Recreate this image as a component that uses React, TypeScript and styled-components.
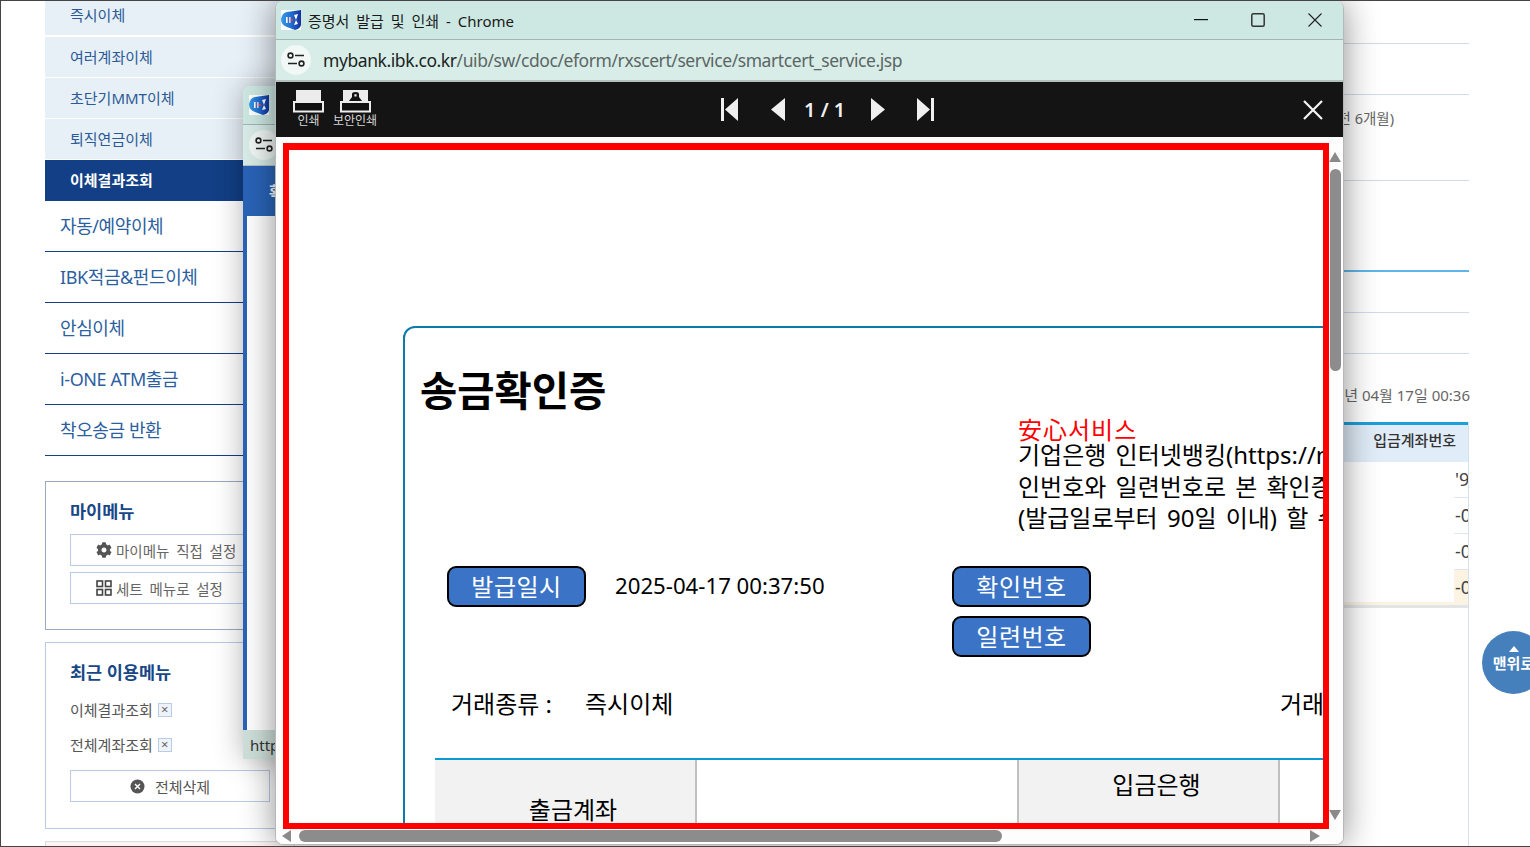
import React from 'react';
import styled, { createGlobalStyle } from 'styled-components';
import { FaCog } from 'react-icons/fa';

const GlobalStyle = createGlobalStyle`
    html, body {
        margin: 0;
        padding: 0;
        background: #fff;
    }
    * {
        box-sizing: border-box;
    }
`;

const FONT = `"Noto Sans", "Noto Sans CJK KR", sans-serif`;

const subMenus = ['즉시이체', '여러계좌이체', '초단기MMT이체', '퇴직연금이체', '이체결과조회'];
const mainMenus = ['자동/예약이체', 'IBK적금&펀드이체', '안심이체', 'i-ONE ATM출금', '착오송금 반환'];
const recentMenus = ['이체결과조회', '전체계좌조회'];
const detailLines = [
    { height: 43, text: '' },
    { height: 51, text: '' },
    { height: 86, text: '(이전 6개월)' },
    { height: 91, text: '', accent: true },
    { height: 41, text: '' },
    { height: 41, text: '' },
];
const resultRows = [
    { value: "'9", highlight: false },
    { value: '-0', highlight: false },
    { value: '-0', highlight: false },
    { value: '-0', highlight: true },
];

const BankLogo = () => (
    <LogoSvg viewBox="0 0 20 20">
        <defs>
            <linearGradient id="ibkLogo" x1="0" x2="1" y1="0" y2="0">
                <stop offset="0" stopColor="#3a9be8" />
                <stop offset="0.5" stopColor="#1f6fd0" />
                <stop offset="1" stopColor="#16309a" />
            </linearGradient>
        </defs>
        <rect width="20" height="20" fill="#fff" />
        <path d="M0 9 Q1 3 6 2 L20 0 L20 15 Q19 19 14 20 L6 17 Q0 15 0 9Z" fill="url(#ibkLogo)" />
        <rect x="5" y="7" width="1.6" height="6" fill="#fff" />
        <rect x="8" y="7" width="1.6" height="6" fill="#f3c7d0" />
        <rect x="10" y="9" width="2" height="2" fill="#e23c4c" />
        <path d="M13 5 L17 4 L15 10 L17 14 L13 15 L15 10Z" fill="#fff" />
    </LogoSvg>
);

const TuneIcon = () => (
    <svg width="18" height="16" viewBox="0 0 18 16" fill="none" stroke="#222" strokeWidth="1.6">
        <circle cx="3.5" cy="3.5" r="2.4" />
        <path d="M8 3.5H17" />
        <path d="M1 11.5H10" />
        <circle cx="14.5" cy="11.5" r="2.4" />
    </svg>
);

const PrintIcon = ({ secure }: { secure?: boolean }) => (
    <svg width="31" height="23" viewBox="0 0 31 23">
        <rect x="3" y="0" width="25" height="12" fill="#ececec" />
        <rect x="1" y="12" width="29" height="9.5" fill="#111" stroke="#ececec" strokeWidth="2" />
        {secure && (
            <path d="M9 11 L12 7 V4 Q12 2 15.5 2 Q19 2 19 4 V7 L22 11Z M14.4 4.2 V6.4 H16.6 V4.2Z" fill="#111" fillRule="evenodd" />
        )}
    </svg>
);

const PagerIcon = ({ kind }: { kind: 'first' | 'prev' | 'next' | 'last' }) => {
    if (kind === 'first') {
        return (
            <svg width="17" height="23" viewBox="0 0 17 23" fill="#f0f0f0">
                <rect width="3" height="23" />
                <path d="M4 11.5 L17 0 V23Z" />
            </svg>
        );
    }
    if (kind === 'last') {
        return (
            <svg width="17" height="23" viewBox="0 0 17 23" fill="#f0f0f0">
                <rect x="14" width="3" height="23" />
                <path d="M13 11.5 L0 0 V23Z" />
            </svg>
        );
    }
    return (
        <svg width="14" height="23" viewBox="0 0 14 23" fill="#f0f0f0">
            <path d={kind === 'prev' ? 'M0 11.5 L14 0 V23Z' : 'M14 11.5 L0 0 V23Z'} />
        </svg>
    );
};

const App = () => {
    return (
        <Screen>
            <GlobalStyle />
            <Page>
                <Sidebar>
                    <SubMenuList>
                        {subMenus.map((label, i) => (
                            <SubMenuItem key={label} $active={i === subMenus.length - 1}>
                                {label}
                            </SubMenuItem>
                        ))}
                    </SubMenuList>
                    <MainMenuList>
                        {mainMenus.map((label) => (
                            <MainMenuItem key={label}>{label}</MainMenuItem>
                        ))}
                    </MainMenuList>
                    <MyMenuBox>
                        <BoxTitle>마이메뉴</BoxTitle>
                        <BoxButton>
                            <FaCog size={16} color="#555" />
                            마이메뉴 직접 설정
                        </BoxButton>
                        <BoxButton>
                            <svg width="16" height="16" viewBox="0 0 16 16" fill="none" stroke="#444" strokeWidth="1.6">
                                <rect x="1" y="1" width="5.5" height="5.5" />
                                <rect x="9.5" y="1" width="5.5" height="5.5" />
                                <rect x="1" y="9.5" width="5.5" height="5.5" />
                                <rect x="9.5" y="9.5" width="5.5" height="5.5" />
                            </svg>
                            세트 메뉴로 설정
                        </BoxButton>
                    </MyMenuBox>
                    <RecentBox>
                        <BoxTitle>최근 이용메뉴</BoxTitle>
                        <RecentList>
                            {recentMenus.map((label) => (
                                <RecentItem key={label}>
                                    {label}
                                    <RemoveBox>×</RemoveBox>
                                </RecentItem>
                            ))}
                        </RecentList>
                        <ClearButton>
                            <svg width="15" height="15" viewBox="0 0 15 15">
                                <circle cx="7.5" cy="7.5" r="7" fill="#555" />
                                <path d="M5 5L10 10M10 5L5 10" stroke="#fff" strokeWidth="1.4" />
                            </svg>
                            전체삭제
                        </ClearButton>
                    </RecentBox>
                    <NoticeBox />
                </Sidebar>
                <Content>
                    {detailLines.map((line, i) => (
                        <DetailRow key={i} $height={line.height} $accent={line.accent}>
                            {line.text && <DetailText>{line.text}</DetailText>}
                        </DetailRow>
                    ))}
                    <QueryTime>2025년 04월 17일 00:36</QueryTime>
                    <ResultArea>
                        <ResultHead>입금계좌번호</ResultHead>
                        <ResultBody>
                            {resultRows.map((row, i) => (
                                <ResultRow key={i} $highlight={row.highlight}>
                                    <ResultValue>{row.value}</ResultValue>
                                </ResultRow>
                            ))}
                            <ResultMask />
                        </ResultBody>
                    </ResultArea>
                </Content>
            </Page>

            <TopButton>
                <TopArrow />
                맨위로
            </TopButton>

            <BackWindow>
                <WindowTitleBar>
                    <BackLogoSlot>
                        <BankLogo />
                    </BackLogoSlot>
                </WindowTitleBar>
                <BackAddressBar>
                    <SiteChip>
                        <TuneIcon />
                    </SiteChip>
                </BackAddressBar>
                <BackBody>
                    <BackBand>확인번호</BackBand>
                    <BackPaper />
                </BackBody>
                <StatusBar>https://mybank.ibk.co.kr</StatusBar>
            </BackWindow>

            <FrontWindow>
                <WindowTitleBar>
                    <BankLogo />
                    <WindowTitle>증명서 발급 및 인쇄 - Chrome</WindowTitle>
                    <WindowControls>
                        <WindowControl>
                            <svg width="14" height="2" viewBox="0 0 14 2">
                                <rect width="14" height="1.2" fill="#111" />
                            </svg>
                        </WindowControl>
                        <WindowControl>
                            <svg width="14" height="14" viewBox="0 0 14 14" fill="none" stroke="#333" strokeWidth="1.5">
                                <rect x="0.8" y="0.8" width="12.4" height="12.4" rx="1.5" />
                            </svg>
                        </WindowControl>
                        <WindowControl>
                            <svg width="14" height="14" viewBox="0 0 14 14" stroke="#222" strokeWidth="1.1">
                                <path d="M0.5 0.5L13.5 13.5M13.5 0.5L0.5 13.5" />
                            </svg>
                        </WindowControl>
                    </WindowControls>
                </WindowTitleBar>
                <AddressBar>
                    <SiteChip>
                        <TuneIcon />
                    </SiteChip>
                    <AddressText>
                        <AddressHost>mybank.ibk.co.kr</AddressHost>/uib/sw/cdoc/eform/rxscert/service/smartcert_service.jsp
                    </AddressText>
                </AddressBar>
                <Toolbar>
                    <ToolGroup>
                        <ToolButton $width={31}>
                            <PrintIcon />
                            <ToolLabel>인쇄</ToolLabel>
                        </ToolButton>
                        <ToolButton $width={44}>
                            <PrintIcon secure />
                            <ToolLabel>보안인쇄</ToolLabel>
                        </ToolButton>
                    </ToolGroup>
                    <Pager>
                        <PagerIcon kind="first" />
                        <PagerIcon kind="prev" />
                        <PageCount>1 / 1</PageCount>
                        <PagerIcon kind="next" />
                        <PagerIcon kind="last" />
                    </Pager>
                    <CloseIcon viewBox="0 0 20 20" stroke="#f4f4f4" strokeWidth="2.2">
                        <path d="M1 1L19 19M19 1L1 19" />
                    </CloseIcon>
                </Toolbar>
                <Viewer>
                    <HighlightFrame>
                        <Paper>
                            <DocCard>
                                <DocTitle>송금확인증</DocTitle>
                                <Notice>
                                    <NoticeHead>安心서비스</NoticeHead>
                                    <NoticeLine>기업은행 인터넷뱅킹(https://mybank.ibk.co.kr)에서 승</NoticeLine>
                                    <NoticeLine>인번호와 일련번호로 본 확인증의 진위 여부를 확인</NoticeLine>
                                    <NoticeLine>(발급일로부터 90일 이내) 할 수 있습니다.</NoticeLine>
                                </Notice>
                                <IssueRow>
                                    <IssueCell>
                                        <PillLabel>발급일시</PillLabel>
                                        <IssueDate>2025-04-17 00:37:50</IssueDate>
                                    </IssueCell>
                                    <PillStack>
                                        <PillLabel>확인번호</PillLabel>
                                        <PillLabel>일련번호</PillLabel>
                                    </PillStack>
                                </IssueRow>
                                <TradeRow>
                                    <TradeLabel>거래종류 :</TradeLabel>
                                    <TradeValue>즉시이체</TradeValue>
                                    <span>거래일시</span>
                                </TradeRow>
                                <DocTable>
                                    <HeadCell $rows={2} $divider>출금계좌</HeadCell>
                                    <ValueCell $rows={2} />
                                    <HeadCell $divider $leftDivider>입금은행</HeadCell>
                                    <ValueCell />
                                    <HeadCell $divider $leftDivider>입금계좌</HeadCell>
                                    <ValueCell />
                                </DocTable>
                            </DocCard>
                        </Paper>
                    </HighlightFrame>
                    <VerticalScroll>
                        <ArrowUp />
                        <VerticalThumb />
                        <ArrowDown />
                    </VerticalScroll>
                    <HorizontalScroll>
                        <ArrowLeft />
                        <HorizontalThumb />
                        <ArrowRight />
                    </HorizontalScroll>
                </Viewer>
            </FrontWindow>
        </Screen>
    );
};

export default App;

const Screen = styled.div`
    position: relative;
    width: 1530px;
    height: 847px;
    overflow: hidden;
    background: #fff;
    border-top: 1px solid #444;
    border-left: 1px solid #444;
    border-bottom: 1px solid #444;
    font-family: ${FONT};
`;

const Page = styled.div`
    display: flex;
    height: 100%;
    padding-left: 44px;
`;

const Sidebar = styled.div`
    flex: none;
    width: 250px;
    display: flex;
    flex-direction: column;
`;

const SubMenuList = styled.div`
    flex: none;
    display: flex;
    flex-direction: column;
    gap: 1px;
    margin-top: -6px;
`;

const SubMenuItem = styled.div<{ $active?: boolean }>`
    height: ${(props) => (props.$active ? 41 : 40)}px;
    padding: 0 0 2px 25px;
    display: flex;
    align-items: center;
    font-size: 15px;
    font-weight: ${(props) => (props.$active ? 700 : 400)};
    color: ${(props) => (props.$active ? '#fff' : '#2c5a96')};
    background: ${(props) => (props.$active ? '#123f85' : '#e7f0f7')};

    &:first-child {
        margin-bottom: 1px;
    }
`;

const MainMenuList = styled.div`
    flex: none;
    display: flex;
    flex-direction: column;
`;

const MainMenuItem = styled.div`
    height: 51px;
    padding: 0 0 2px 15px;
    display: flex;
    align-items: center;
    font-size: 18px;
    letter-spacing: -0.4px;
    color: #2d5f9f;
    border-bottom: 1px solid #123f85;
`;

const MyMenuBox = styled.div`
    flex: none;
    margin-top: 25px;
    height: 149px;
    padding: 15px 24px 0;
    border: 1px solid #9aa9c0;
`;

const BoxTitle = styled.div`
    height: 30px;
    padding-bottom: 4px;
    display: flex;
    align-items: center;
    font-size: 17.5px;
    font-weight: 700;
    color: #174787;
`;

const BoxButton = styled.div`
    height: 32px;
    margin-top: 6px;
    padding-left: 25px;
    display: flex;
    align-items: center;
    gap: 4px;
    font-size: 14.5px;
    word-spacing: 3px;
    color: #666;
    white-space: nowrap;
    border: 1px solid #b9cce6;

    ${BoxTitle} + & {
        margin-top: 7px;
    }
`;

const RecentBox = styled.div`
    flex: none;
    margin-top: 12px;
    height: 187px;
    padding: 15px 24px 0;
    border: 1px solid #b9cce6;
`;

const RecentList = styled.div`
    margin-top: 4px;
    display: flex;
    flex-direction: column;
`;

const RecentItem = styled.div`
    height: 35px;
    display: flex;
    align-items: center;
    gap: 5px;
    font-size: 15px;
    color: #555;
`;

const RemoveBox = styled.span`
    width: 14px;
    height: 14px;
    display: flex;
    align-items: center;
    justify-content: center;
    font-size: 13px;
    line-height: 1;
    color: #666;
    background: #eef3fa;
    border: 1px solid #b9cce6;
`;

const ClearButton = styled.div`
    height: 32px;
    margin-top: 8px;
    display: flex;
    align-items: center;
    justify-content: center;
    gap: 10px;
    font-size: 15px;
    color: #555;
    border: 1px solid #b9cce6;
`;

const NoticeBox = styled.div`
    margin-top: 12px;
    height: 60px;
    flex: none;
    background: #fdf4f1;
    border: 1px solid #d7dbe6;
`;

const Content = styled.div`
    flex: none;
    width: 1175px;
    display: flex;
    flex-direction: column;
`;

const DetailRow = styled.div<{ $height: number; $accent?: boolean }>`
    flex: none;
    height: ${(props) => props.$height}px;
    padding: 12px 75px 0 0;
    margin-right: 1px;
    display: flex;
    justify-content: flex-end;
    border-bottom: ${(props) => (props.$accent ? '2px solid #5fb5ea' : '1px solid #cfdce9')};
`;

const DetailText = styled.span`
    font-size: 14.5px;
    color: #666;
`;

const QueryTime = styled.div`
    flex: none;
    height: 68px;
    padding-top: 31px;
    text-align: right;
    font-size: 15px;
    line-height: 20px;
    color: #666;
`;

const ResultArea = styled.div`
    flex: 1;
    margin-right: 1px;
    border-right: 1px solid #d4e0ee;
`;

const ResultHead = styled.div`
    height: 40px;
    padding: 0 12px 9px 0;
    display: flex;
    align-items: center;
    justify-content: flex-end;
    font-size: 15px;
    font-weight: 500;
    color: #333;
    background: #e0ecf8;
    border-top: 3px solid #1ba0d8;
`;

const ResultBody = styled.div`
    position: relative;
    border-bottom: 2px solid #e4e4e4;
`;

const ResultRow = styled.div<{ $highlight?: boolean }>`
    height: 36px;
    padding: 0 0 2px 1160px;
    display: flex;
    align-items: center;
    overflow: hidden;
    background: ${(props) => (props.$highlight ? '#fdf3e3' : '#fff')};
    border-bottom: 1px solid #dbe7f3;
`;

const ResultValue = styled.span`
    font-size: 18px;
    color: #444;
    white-space: nowrap;
`;

const ResultMask = styled.div`
    position: absolute;
    top: 5px;
    right: 14px;
    width: 110px;
    height: 135px;
    background: #fff;
`;

const TopButton = styled.div`
    position: absolute;
    left: 1481px;
    top: 630px;
    width: 63px;
    height: 63px;
    border-radius: 50%;
    padding-top: 15px;
    display: flex;
    flex-direction: column;
    align-items: center;
    gap: 2px;
    font-size: 15px;
    font-weight: 700;
    line-height: 18px;
    white-space: nowrap;
    color: #fff;
    background: #4680bc;
`;

const TopArrow = styled.span`
    width: 0;
    height: 0;
    border-left: 5px solid transparent;
    border-right: 5px solid transparent;
    border-bottom: 6px solid #fff;
`;

const BackWindow = styled.div`
    position: absolute;
    left: 242px;
    top: 85px;
    width: 700px;
    height: 673px;
    display: flex;
    flex-direction: column;
    overflow: hidden;
    border-radius: 8px 8px 0 0;
    box-shadow: 0 0 30px rgba(0, 0, 0, 0.3);
`;

const BackLogoSlot = styled.div`
    margin-left: 1px;
    display: flex;
`;

const BackAddressBar = styled.div`
    height: 41px;
    flex: none;
    padding-left: 6px;
    display: flex;
    align-items: center;
    background: #d9edE8;
    border-bottom: 1px solid #b5c4c0;
`;

const BackBody = styled.div`
    flex: 1;
    display: flex;
    flex-direction: column;
    border-left: 4px solid #2a64b8;
    background: #2a64b8;
`;

const BackBand = styled.div`
    height: 50px;
    flex: none;
    padding-left: 22px;
    display: flex;
    align-items: center;
    font-size: 16px;
    font-weight: 700;
    color: #fff;
`;

const BackPaper = styled.div`
    flex: 1;
    background: #fff;
`;

const StatusBar = styled.div`
    height: 29px;
    flex: none;
    padding-left: 7px;
    display: flex;
    align-items: center;
    font-size: 15px;
    color: #333;
    background: #cfe0da;
`;

const FrontWindow = styled.div`
    position: absolute;
    left: 274px;
    top: 0;
    width: 1069px;
    height: 844px;
    display: flex;
    flex-direction: column;
    overflow: hidden;
    border-radius: 8px;
    border: 1px solid #b4b9b8;
    border-top: 0;
    background: #fdfdfd;
    box-shadow: 0 0 34px rgba(0, 0, 0, 0.45);
`;

const WindowTitleBar = styled.div`
    height: 39px;
    flex: none;
    padding-left: 5px;
    display: flex;
    align-items: center;
    background: #cde8e2;
    border-bottom: 1px solid #a5b5b1;
`;

const LogoSvg = styled.svg`
    width: 20px;
    height: 20px;
    flex: none;
`;

const WindowTitle = styled.div`
    margin-left: 7px;
    font-size: 15px;
    word-spacing: 3px;
    color: #1a1a1a;
`;

const WindowControls = styled.div`
    margin-left: auto;
    display: flex;
`;

const WindowControl = styled.div`
    width: 57px;
    height: 38px;
    display: flex;
    align-items: center;
    justify-content: center;
`;

const AddressBar = styled.div`
    height: 42px;
    flex: none;
    padding-left: 5px;
    display: flex;
    align-items: center;
    gap: 12px;
    background: #d9edE8;
    border-bottom: 2px solid #b5c0bd;
`;

const SiteChip = styled.div`
    width: 30px;
    height: 30px;
    border-radius: 50%;
    display: flex;
    align-items: center;
    justify-content: center;
    background: #f1f8f6;
`;

const AddressText = styled.div`
    font-size: 17.5px;
    letter-spacing: -0.42px;
    color: #5b6664;
    white-space: nowrap;
`;

const AddressHost = styled.span`
    color: #1a2422;
`;

const Toolbar = styled.div`
    height: 55px;
    flex: none;
    padding: 0 20px 0 17px;
    display: flex;
    align-items: center;
    background: #141414;
`;

const ToolGroup = styled.div`
    display: flex;
    gap: 9px;
`;

const ToolButton = styled.div<{ $width: number }>`
    width: ${(props) => props.$width}px;
    display: flex;
    flex-direction: column;
    align-items: center;
    margin-top: -1px;
`;

const ToolLabel = styled.span`
    font-size: 12px;
    line-height: 15px;
    white-space: nowrap;
    color: #d6d6d6;
`;

const Pager = styled.div`
    margin-left: 344px;
    display: flex;
    align-items: center;
    gap: 33px;

    & > svg:nth-child(2) {
        margin-right: -14px;
    }
    & > svg:nth-child(4) {
        margin-left: -7px;
    }
    & > svg:nth-child(5) {
        margin-left: -1px;
    }
`;

const PageCount = styled.span`
    font-size: 20px;
    font-weight: 600;
    line-height: 23px;
    white-space: pre;
    color: #f0f0f0;
`;

const CloseIcon = styled.svg`
    width: 20px;
    height: 20px;
    margin-left: auto;
`;

const Viewer = styled.div`
    flex: 1;
    padding: 6px 0 0 6px;
    display: grid;
    grid-template-columns: 1046px 12px;
    grid-template-rows: 686px 14px;
    background: #fdfdfd;
`;

const HighlightFrame = styled.div`
    margin-left: 1px;
    margin-right: -1px;
    border: 6px solid #f00;
    border-top-width: 7px;
    overflow: hidden;
    background: #fff;
`;

const Paper = styled.div`
    width: 1800px;
    padding: 176px 0 0 114px;
    font-size: 24px;
    color: #000;
`;

const DocCard = styled.div`
    width: 1600px;
    height: 900px;
    border: 2px solid #0a7bab;
    border-radius: 12px 12px 0 0;
    background: #fff;
`;

const DocTitle = styled.h1`
    margin: 37px 0 0 15px;
    padding-top: 1px;
    height: 50px;
    font-size: 40.5px;
    font-weight: 600;
    line-height: 50px;
`;

const Notice = styled.div`
    margin: 4px 0 0 613px;
    white-space: nowrap;
`;

const NoticeHead = styled.div`
    height: 20px;
    font-family: "Liberation Serif", "Noto Sans CJK KR", serif;
    font-size: 24px;
    line-height: 24px;
    letter-spacing: 1px;
    color: #f00;
`;

const NoticeLine = styled.div`
    height: 31.5px;
    line-height: 31.5px;
    word-spacing: 3px;
`;

const IssueRow = styled.div`
    margin-top: 32.5px;
    padding-left: 42px;
    display: flex;
    align-items: flex-start;
`;

const IssueCell = styled.div`
    width: 505px;
    display: flex;
    align-items: center;
    gap: 29px;
`;

const PillLabel = styled.div`
    width: 139px;
    height: 41px;
    padding-bottom: 2px;
    display: flex;
    align-items: center;
    justify-content: center;
    letter-spacing: 0.5px;
    color: #fff;
    background: #3b74c6;
    border: 2px solid #000;
    border-radius: 9px;
`;

const IssueDate = styled.span`
    padding-bottom: 2px;
    font-size: 22.2px;
`;

const PillStack = styled.div`
    display: flex;
    flex-direction: column;
    gap: 9px;
`;

const TradeRow = styled.div`
    margin-top: 31px;
    padding: 0 0 4px 46px;
    height: 32px;
    display: flex;
    align-items: center;
    white-space: nowrap;
`;

const TradeLabel = styled.span`
    width: 134px;
    flex: none;
`;

const TradeValue = styled.span`
    width: 695px;
    flex: none;
`;

const DocTable = styled.div`
    margin: 38px 0 0 30px;
    width: 1200px;
    display: grid;
    grid-template-columns: 262px 320px 263px 1fr;
    grid-auto-rows: 50px;
    border-top: 2px solid #0a9ad4;
`;

const HeadCell = styled.div<{ $rows?: number; $divider?: boolean; $leftDivider?: boolean }>`
    grid-row: span ${(props) => props.$rows ?? 1};
    padding: 0 0 4px 16px;
    display: flex;
    align-items: center;
    justify-content: center;
    background: #f2f2f2;
    border-right: ${(props) => (props.$divider ? '2px solid #c0c0c0' : 'none')};
    border-left: ${(props) => (props.$leftDivider ? '2px solid #c0c0c0' : 'none')};
`;

const ValueCell = styled.div<{ $rows?: number }>`
    grid-row: span ${(props) => props.$rows ?? 1};
`;

const VerticalScroll = styled.div`
    margin: 0 -1px 0 1px;
    padding-top: 9px;
    display: flex;
    flex-direction: column;
    align-items: center;
`;

const ArrowUp = styled.span`
    border-left: 6px solid transparent;
    border-right: 6px solid transparent;
    border-bottom: 10px solid #8a8a8a;
`;

const ArrowDown = styled.span`
    margin-top: 439px;
    border-left: 6px solid transparent;
    border-right: 6px solid transparent;
    border-top: 10px solid #8a8a8a;
`;

const VerticalThumb = styled.div`
    margin-top: 7px;
    width: 11px;
    height: 202px;
    border-radius: 6px;
    background: #8c8c8c;
`;

const HorizontalScroll = styled.div`
    grid-column: 1 / -1;
    display: flex;
    align-items: center;
`;

const ArrowLeft = styled.span`
    border-top: 6px solid transparent;
    border-bottom: 6px solid transparent;
    border-right: 9px solid #8a8a8a;
`;

const ArrowRight = styled.span`
    margin-left: 308px;
    border-top: 6px solid transparent;
    border-bottom: 6px solid transparent;
    border-left: 10px solid #8a8a8a;
`;

const HorizontalThumb = styled.div`
    margin-left: 8px;
    width: 703px;
    height: 12px;
    border-radius: 6px;
    background: #8c8c8c;
`;
